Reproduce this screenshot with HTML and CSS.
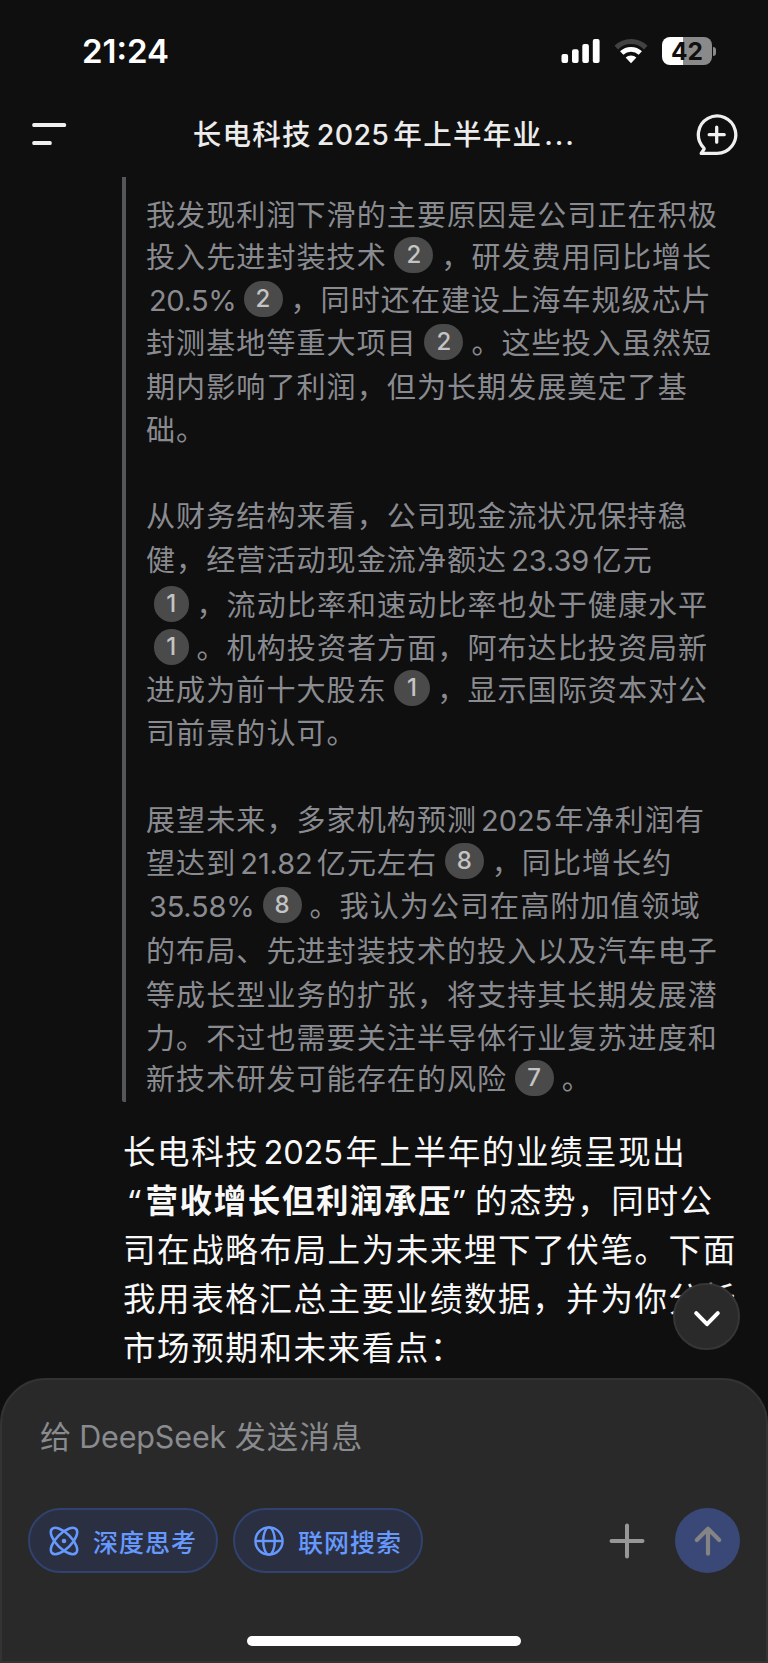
FILE: index.html
```html
<!doctype html>
<html lang="zh-CN">
  <head>
    <title>DeepSeek</title>
    <meta charset="utf-8" />
    <link rel="stylesheet" href="styles.css">
  </head>

  <body>
    <div class="phone">
      <div class="status-bar">
        <span class="time">21:24</span>
        <div class="status-icons">
          <svg class="signal" width="40" height="26" viewBox="0 0 40 26" fill="#fff">
            <rect x="0.5" y="16" width="6.6" height="9" rx="2" />
            <rect x="11" y="11.2" width="6.6" height="13.8" rx="2" />
            <rect x="21.3" y="6" width="6.6" height="19" rx="2" />
            <rect x="31.8" y="1" width="6.8" height="24" rx="2" />
          </svg>
          <svg class="wifi" width="34" height="26" viewBox="0 0 34 26" fill="none">
            <path d="M2.3 9.6a21 21 0 0 1 29.4 0" stroke="#424242" stroke-width="5" />
            <path d="M7.7 15a13.5 13.5 0 0 1 18.6 0" stroke="#fff" stroke-width="4.8" />
            <path d="M17 25.2l-5.4-5.6a7.8 7.8 0 0 1 10.8 0z" fill="#fff" />
          </svg>
          <div class="battery"><span>42</span></div>
          <div class="battery-cap"></div>
        </div>
      </div>

      <div class="header">
        <svg width="36" height="24" viewBox="0 0 36 24" fill="#f0f0f0">
          <rect x="0.3" y="0" width="33.8" height="4" rx="1.6" />
          <rect x="0.3" y="18" width="19.4" height="4" rx="1.6" />
        </svg>
        <div class="title">长电科技<span class="title-num">2025</span>年上半年业<span class="dots">...</span></div>
        <svg class="new-chat" width="42" height="42" viewBox="0 0 42 42" fill="none" stroke="#f0f0f0" stroke-width="3.3" stroke-linecap="round" stroke-linejoin="round">
          <path d="M20.7 39.4H5.2l2.7-4a1.4 1.4 0 0 0-.2-1.6A18.7 18.7 0 1 1 20.7 39.4z" />
          <path d="M20.7 13.2v15M13.2 20.7h15" />
        </svg>
      </div>

      <div class="chat">
        <div class="thinking">
          <div class="paragraph">
            <div class="line">我发现利润下滑的主要原因是公司正在积极</div>
            <div class="line tight">投入先进封装技术<span class="cite">2</span>，研发费用同比增长</div>
            <div class="line"><span class="num percent">20.5%</span><span class="cite">2</span>，同时还在建设上海车规级芯片</div>
            <div class="line">封测基地等重大项目<span class="cite">2</span>。这些投入虽然短</div>
            <div class="line">期内影响了利润，但为长期发展奠定了基</div>
            <div class="line">础。</div>
          </div>
          <div class="paragraph">
            <div class="line">从财务结构来看，公司现金流状况保持稳</div>
            <div class="line">健，经营活动现金流净额达<span class="num amount">23.39</span>亿元</div>
            <div class="line loose"><span class="cite one">1</span>，流动比率和速动比率也处于健康水平</div>
            <div class="line"><span class="cite one">1</span>。机构投资者方面，阿布达比投资局新</div>
            <div class="line tight">进成为前十大股东<span class="cite one">1</span>，显示国际资本对公</div>
            <div class="line">司前景的认可。</div>
          </div>
          <div class="paragraph">
            <div class="line">展望未来，多家机构预测<span class="num year">2025</span>年净利润有</div>
            <div class="line">望达到<span class="num profit">21.82</span>亿元左右<span class="cite">8</span>，同比增长约</div>
            <div class="line"><span class="num growth">35.58%</span><span class="cite">8</span>。我认为公司在高附加值领域</div>
            <div class="line loose">的布局、先进封装技术的投入以及汽车电子</div>
            <div class="line">等成长型业务的扩张，将支持其长期发展潜</div>
            <div class="line">力。不过也需要关注半导体行业复苏进度和</div>
            <div class="line tight">新技术研发可能存在的风险<span class="cite">7</span>。</div>
          </div>
        </div>

        <div class="answer">
          <div class="line">长电科技<span class="num year">2025</span>年上半年的业绩呈现出</div>
          <div class="line"><span class="quote-open">“</span><b>营收增长但利润承压</b><span class="quote-close">”</span>的态势，同时公</div>
          <div class="line">司在战略布局上为未来埋下了伏笔。下面</div>
          <div class="line">我用表格汇总主要业绩数据，并为你分析</div>
          <div class="line">市场预期和未来看点：</div>
        </div>

        <div class="scroll-down">
          <svg width="30" height="20" viewBox="0 0 30 20" fill="none" stroke="#fff" stroke-width="4" stroke-linecap="round" stroke-linejoin="round">
            <path d="M4.2 4.2L15 15.2 25.8 4.2" />
          </svg>
        </div>
      </div>

      <div class="composer">
        <div class="placeholder">给<span class="brand">DeepSeek</span>发送消息</div>
        <div class="actions">
          <div class="pill">
            <svg width="32" height="32" viewBox="0 0 32 32" fill="none" stroke="#6699ff" stroke-width="2.6">
              <ellipse cx="16" cy="16" rx="17" ry="7.6" transform="rotate(45 16 16)" />
              <ellipse cx="16" cy="16" rx="17" ry="7.6" transform="rotate(-45 16 16)" />
              <circle cx="16" cy="16" r="2.3" fill="#6699ff" stroke="none" />
            </svg>
            <span>深度思考</span>
          </div>
          <div class="pill">
            <svg width="32" height="32" viewBox="0 0 32 32" fill="none" stroke="#6699ff" stroke-width="2.4">
              <circle cx="16" cy="16" r="13.6" />
              <ellipse cx="16" cy="16" rx="5.8" ry="13.6" />
              <path d="M2.4 16h27.2" />
            </svg>
            <span>联网搜索</span>
          </div>
          <svg class="plus" width="36" height="36" viewBox="0 0 36 36" stroke="#979797" stroke-width="4" stroke-linecap="round">
            <path d="M18 2.5v31M2.5 18h31" />
          </svg>
          <div class="send">
            <svg width="30" height="32" viewBox="0 0 30 32" fill="none" stroke="#848484" stroke-width="4.2" stroke-linecap="round" stroke-linejoin="round">
              <path d="M15 3.8v24.9M3.8 15L15 3.8 26.2 15" />
            </svg>
          </div>
        </div>
        <div class="home-bar"></div>
      </div>
    </div>
  </body>
</html>
```

FILE: styles.css
```css
* {
  box-sizing: border-box;
}

body {
  margin: 0;
  background-color: #0f0f0f;
  font-family: Inter, "Noto Sans CJK SC", sans-serif;
}

svg {
  display: block;
  flex: none;
}

.phone {
  display: flex;
  flex-direction: column;
  width: 768px;
  height: 1663px;
  overflow: hidden;
}

/* status bar */

.status-bar {
  display: flex;
  justify-content: space-between;
  align-items: center;
  height: 96px;
  padding: 6px 52px 0 82px;
}

.time {
  color: #fff;
  font-size: 33px;
  font-weight: 600;
  letter-spacing: 0;
}

.status-icons {
  display: flex;
  align-items: center;
}

.wifi {
  margin-left: 13px;
}

.battery {
  width: 50px;
  height: 28px;
  margin-left: 14px;
  border-radius: 8px;
  background: linear-gradient(90deg, #fff 21px, #8a8a8a 21px);
  color: #0f0f0f;
  font-size: 24.5px;
  font-weight: 700;
  line-height: 28px;
  text-align: center;
}

.battery-cap {
  width: 3px;
  height: 9px;
  margin-left: 1px;
  border-radius: 0 4px 4px 0;
  background-color: #8a8a8a;
}

/* header */

.header {
  display: flex;
  justify-content: space-between;
  align-items: center;
  height: 81px;
  padding: 0 30px 4px 32px;
}

.title {
  display: flex;
  align-items: baseline;
  margin-left: 3px;
  color: #ececec;
  font-size: 28.5px;
  font-weight: 500;
  letter-spacing: 1.3px;
  line-height: 40px;
}

.title-num {
  width: 81.5px;
  padding-left: 5px;
  letter-spacing: 0.3px;
}

.dots {
  width: 32px;
  padding-left: 2px;
  letter-spacing: 1.8px;
  font-feature-settings: "calt" 0;
}

/* chat */

.chat {
  position: relative;
  flex: 1;
  padding-left: 122px;
}

.thinking {
  padding: 17.4px 0 0 20px;
  border-left: 4px solid #55565a;
  border-radius: 0 0 2px 2px;
  color: #8a8b90;
  font-size: 29px;
  letter-spacing: 1.1px;
}

.paragraph + .paragraph {
  margin-top: 43.3px;
}

.line {
  display: flex;
  align-items: center;
  height: 43.3px;
  line-height: 43.3px;
  white-space: nowrap;
}

.tight {
  margin-top: -2px;
}

.loose {
  margin-top: 2px;
}

.cite {
  width: 39px;
  height: 36px;
  margin: -4px 8px 0 7.5px;
  border-radius: 18px;
  background-color: #4a4a4a;
  color: #c4c4c4;
  font-size: 24px;
  font-weight: 500;
  letter-spacing: 0;
  line-height: 36px;
  text-align: center;
}

.one {
  width: 35.5px;
  margin-right: 7.5px;
}

.num {
  padding-left: 4px;
  letter-spacing: -0.1px;
}

.percent {
  width: 90px;
  padding-left: 3px;
  letter-spacing: -0.4px;
}

.amount {
  width: 85.5px;
}

.thinking .year {
  width: 77.5px;
}

.profit {
  width: 80.5px;
}

.growth {
  width: 109px;
  padding-left: 3px;
  letter-spacing: -0.2px;
}

.answer {
  margin-top: 25.9px;
  padding-left: 1px;
  color: #f8f8f8;
  font-size: 32.5px;
  letter-spacing: 1.6px;
}

.answer .line {
  height: 49.2px;
  line-height: 49.2px;
}

.answer .year {
  width: 86px;
}

.quote-open,
.quote-close {
  width: 22.5px;
  font-family: "Noto Sans", sans-serif;
}

.quote-open {
  padding-left: 6px;
}

.quote-close {
  padding-left: 1px;
}

.scroll-down {
  display: flex;
  justify-content: center;
  align-items: center;
  position: absolute;
  right: 28px;
  bottom: 28px;
  width: 67px;
  height: 67px;
  padding-top: 5px;
  border: 2px solid #363636;
  border-radius: 50%;
  background-color: #2a2a2a;
}

/* composer */

.composer {
  display: flex;
  flex-direction: column;
  height: 285px;
  padding: 34px 26px 0;
  border: 2px solid #333;
  border-radius: 46px 46px 0 0;
  background-color: #292929;
}

.placeholder {
  display: flex;
  height: 46px;
  padding-left: 12px;
  color: #8a8b8f;
  font-size: 31px;
  letter-spacing: 1.2px;
  line-height: 46px;
}

.brand {
  width: 162.5px;
  padding-left: 7px;
  font-size: 30.5px;
  letter-spacing: -0.15px;
}

.actions {
  display: flex;
  align-items: center;
  margin-top: 48px;
}

.pill {
  display: flex;
  align-items: center;
  width: 189.5px;
  height: 65px;
  margin-right: 15.5px;
  padding-left: 18px;
  gap: 13px;
  border: 2px solid #30426f;
  border-radius: 33px;
  background-color: #2a3042;
  color: #6699ff;
  font-size: 25px;
  font-weight: 500;
  letter-spacing: 1px;
}

.plus {
  margin-left: auto;
}

.send {
  display: flex;
  justify-content: center;
  align-items: center;
  width: 65px;
  height: 65px;
  margin-left: 30px;
  border-radius: 50%;
  background-color: #394877;
}

.home-bar {
  width: 274px;
  height: 10px;
  margin: 63px auto 0;
  border-radius: 5px;
  background-color: #fff;
}
```
